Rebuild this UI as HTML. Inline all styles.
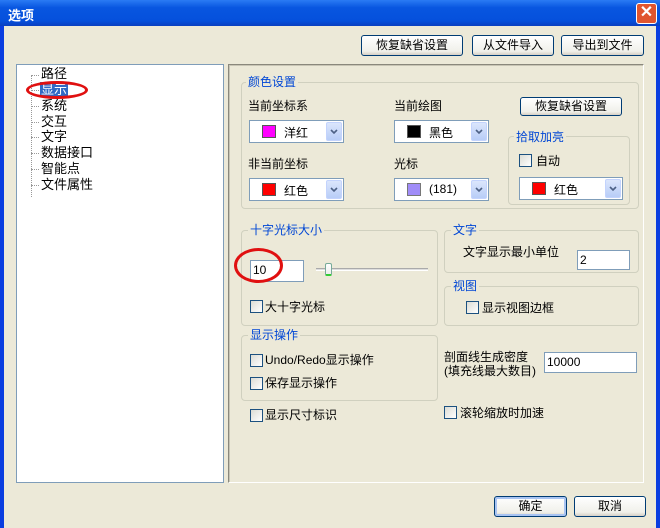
<!DOCTYPE html>
<html><head><meta charset="utf-8"><style>
*{box-sizing:border-box;margin:0;padding:0}
body{width:660px;height:528px;overflow:hidden;background:#0a3ee0;font-family:"Liberation Sans","Noto Sans CJK SC","WenQuanYi Zen Hei",sans-serif;font-size:12px;color:#000;position:relative}
.a{position:absolute}
#title{left:0;top:0;width:660px;height:26px;background:linear-gradient(#2a7bf4,#0856e0 30%,#0550dc 80%,#0a3fc0)}
#tt{left:8px;top:5px;color:#fff;font-weight:bold;font-size:13px}
#close{left:636px;top:3px;width:21px;height:21px;border:1px solid #fff;border-radius:3px;background:#e0552f;color:#fff;font-size:16px;line-height:18px;text-align:center;font-weight:bold}
#body{left:4px;top:26px;width:652px;height:502px;background:#ece9d8}
.btn{position:absolute;height:21px;border:1px solid #003c74;border-radius:3px;background:linear-gradient(#fff,#f0f0ea 80%,#d6d0c5);text-align:center;line-height:19px}
.grp{position:absolute;border:1px solid #d0d0bf;border-radius:4px}
.gl{position:absolute;background:#ece9d8;color:#0046d5;padding:0 2px;line-height:14px}
.lbl{position:absolute;line-height:14px}
.combo{position:absolute;height:23px;background:#fff;border:1px solid #7f9db9}
.combo .sw{position:absolute;left:12px;top:4px;width:14px;height:13px;border:1px solid #555}
.combo .t{position:absolute;left:34px;top:3px}
.combo .dd{position:absolute;right:1px;top:1px;width:16px;height:19px;background:linear-gradient(#dbe6fc,#b8cdf7);border:1px solid #c3d3fd;border-radius:2px}
.combo .dd svg{position:absolute;left:3px;top:6px}
.cb{position:absolute;width:13px;height:13px;border:1px solid #1c5180;background:linear-gradient(135deg,#dcdcd4,#fff)}
.inp{position:absolute;background:#fff;border:1px solid #7f9db9;padding:3px 2px;line-height:13px}
.tree{position:absolute;left:16px;top:64px;width:208px;height:419px;background:#fff;border:1px solid #7f9db9}
.ti{position:absolute;left:24px;line-height:15px;font-size:13px}
.dot{position:absolute;left:14px;width:8px;border-top:1px dotted #999}
</style></head><body>
<div id="title" class="a"></div>
<div id="tt" class="a">选项</div>
<div id="close" class="a">✕</div>
<div id="body" class="a"></div>

<div class="btn" style="left:361px;top:35px;width:102px">恢复缺省设置</div>
<div class="btn" style="left:472px;top:35px;width:82px">从文件导入</div>
<div class="btn" style="left:561px;top:35px;width:83px">导出到文件</div>

<div class="tree">
 <div class="a" style="left:14px;top:10px;height:122px;border-left:1px dotted #999"></div>
 <div class="dot" style="top:10px"></div><div class="ti" style="top:1px">路径</div>
 <div class="dot" style="top:25px"></div><div class="ti" style="top:17px;background:#316ac5;color:#fff;padding:0 1px;left:23px">显示</div>
 <div class="dot" style="top:41px"></div><div class="ti" style="top:33px">系统</div>
 <div class="dot" style="top:57px"></div><div class="ti" style="top:49px">交互</div>
 <div class="dot" style="top:72px"></div><div class="ti" style="top:64px">文字</div>
 <div class="dot" style="top:88px"></div><div class="ti" style="top:80px">数据接口</div>
 <div class="dot" style="top:104px"></div><div class="ti" style="top:96px">智能点</div>
 <div class="dot" style="top:120px"></div><div class="ti" style="top:112px">文件属性</div>
</div>
<div class="a" style="left:26px;top:81px;width:62px;height:18px;border:3px solid #e01010;border-radius:50%"></div>

<div class="a" style="left:228px;top:64px;width:416px;height:419px;border:1px solid;border-color:#8a887c #fff #fff #8a887c;box-shadow:inset 1px 1px 0 #c8c5b5"></div>

<div class="grp" style="left:241px;top:82px;width:398px;height:127px"></div>
<div class="gl" style="left:246px;top:75px">颜色设置</div>
<div class="lbl" style="left:248px;top:99px">当前坐标系</div>
<div class="combo" style="left:249px;top:120px;width:95px"><div class="sw" style="background:#f0f"></div><div class="t">洋红</div><div class="dd"><svg width="8" height="6"><path d="M1 1L4 4L7 1" stroke="#4d6185" stroke-width="1.6" fill="none"/></svg></div></div>
<div class="lbl" style="left:394px;top:99px">当前绘图</div>
<div class="combo" style="left:394px;top:120px;width:95px"><div class="sw" style="background:#000"></div><div class="t">黑色</div><div class="dd"><svg width="8" height="6"><path d="M1 1L4 4L7 1" stroke="#4d6185" stroke-width="1.6" fill="none"/></svg></div></div>
<div class="btn" style="left:520px;top:97px;width:102px;height:19px;line-height:17px">恢复缺省设置</div>
<div class="lbl" style="left:248px;top:157px">非当前坐标</div>
<div class="combo" style="left:249px;top:178px;width:95px"><div class="sw" style="background:#f00"></div><div class="t">红色</div><div class="dd"><svg width="8" height="6"><path d="M1 1L4 4L7 1" stroke="#4d6185" stroke-width="1.6" fill="none"/></svg></div></div>
<div class="lbl" style="left:394px;top:157px">光标</div>
<div class="combo" style="left:394px;top:178px;width:95px"><div class="sw" style="background:#a08cf8;border-color:#777"></div><div class="t">(181)</div><div class="dd"><svg width="8" height="6"><path d="M1 1L4 4L7 1" stroke="#4d6185" stroke-width="1.6" fill="none"/></svg></div></div>
<div class="grp" style="left:508px;top:136px;width:122px;height:69px"></div>
<div class="gl" style="left:514px;top:130px">拾取加亮</div>
<div class="cb" style="left:519px;top:154px"></div><div class="lbl" style="left:536px;top:154px">自动</div>
<div class="combo" style="left:519px;top:177px;width:104px"><div class="sw" style="background:#f00"></div><div class="t">红色</div><div class="dd"><svg width="8" height="6"><path d="M1 1L4 4L7 1" stroke="#4d6185" stroke-width="1.6" fill="none"/></svg></div></div>

<div class="grp" style="left:241px;top:230px;width:197px;height:96px"></div>
<div class="gl" style="left:248px;top:223px">十字光标大小</div>
<div class="inp" style="left:250px;top:260px;width:54px;height:22px">10</div>
<div class="a" style="left:316px;top:268px;width:112px;height:3px;border-top:1px solid #aaa;border-bottom:1px solid #fff;background:#ddd"></div>
<div class="a" style="left:325px;top:263px;width:7px;height:13px;border:1px solid #7a9;border-radius:2px;background:linear-gradient(#fff,#eee);border-bottom:2px solid #3c3"></div>
<div class="cb" style="left:250px;top:300px"></div><div class="lbl" style="left:265px;top:300px">大十字光标</div>
<div class="a" style="left:234px;top:248px;width:49px;height:35px;border:3px solid #e01010;border-radius:50%"></div>

<div class="grp" style="left:444px;top:230px;width:195px;height:43px"></div>
<div class="gl" style="left:451px;top:223px">文字</div>
<div class="lbl" style="left:463px;top:245px">文字显示最小单位</div>
<div class="inp" style="left:577px;top:250px;width:53px;height:20px">2</div>
<div class="grp" style="left:444px;top:286px;width:195px;height:40px"></div>
<div class="gl" style="left:451px;top:279px">视图</div>
<div class="cb" style="left:466px;top:301px"></div><div class="lbl" style="left:482px;top:301px">显示视图边框</div>

<div class="grp" style="left:241px;top:335px;width:197px;height:66px"></div>
<div class="gl" style="left:248px;top:328px">显示操作</div>
<div class="cb" style="left:250px;top:354px"></div><div class="lbl" style="left:265px;top:353px">Undo/Redo显示操作</div>
<div class="cb" style="left:250px;top:377px"></div><div class="lbl" style="left:265px;top:376px">保存显示操作</div>
<div class="lbl" style="left:444px;top:350px;line-height:14px">剖面线生成密度<br>(填充线最大数目)</div>
<div class="inp" style="left:544px;top:352px;width:93px;height:21px">10000</div>
<div class="cb" style="left:250px;top:409px"></div><div class="lbl" style="left:265px;top:408px">显示尺寸标识</div>
<div class="cb" style="left:444px;top:406px"></div><div class="lbl" style="left:460px;top:406px">滚轮缩放时加速</div>

<div class="btn" style="left:494px;top:496px;width:73px;box-shadow:inset 0 0 0 2px #a9c4f2">确定</div>
<div class="btn" style="left:574px;top:496px;width:72px">取消</div>
</body></html>
